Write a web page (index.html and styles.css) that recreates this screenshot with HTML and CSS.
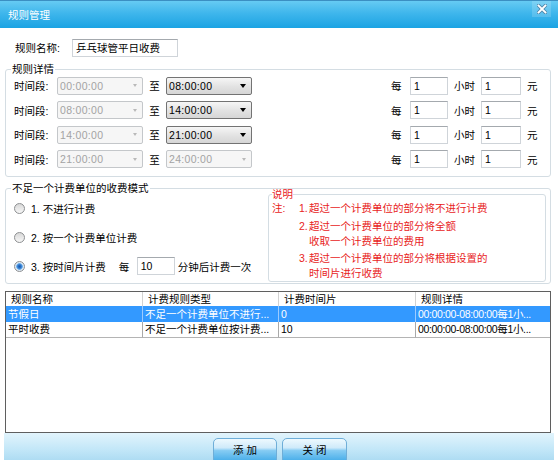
FILE: index.html
```html
<!DOCTYPE html>
<html lang="zh-CN">
<head>
<meta charset="utf-8">
<title>规则管理</title>
<link rel="stylesheet" href="styles.css">
</head>
<body>
<div class="window">
  <div class="titlebar">
    <span class="title">规则管理</span>
    <span class="close"><svg width="10" height="10" viewBox="0 0 10 10"><path d="M1.6 1.6 L8.4 8.4 M8.4 1.6 L1.6 8.4" stroke="#4f86aa" stroke-width="3.6" stroke-linecap="square"/><path d="M1.6 1.6 L8.4 8.4 M8.4 1.6 L1.6 8.4" stroke="#ffffff" stroke-width="2" stroke-linecap="square"/></svg></span>
  </div>
  <div class="body">
    <div class="name-row">
      <span class="name-label">规则名称:</span>
      <span class="field name-field">乒乓球管平日收费</span>
    </div>

    <fieldset class="group detail">
      <legend>规则详情</legend>
      <div class="rows">
        <div class="trow">
          <span class="seg-label">时间段:</span>
          <span class="combo off"><span class="val">00:00:00</span><span class="arrow"></span></span>
          <span class="to">至</span>
          <span class="combo on"><span class="val">08:00:00</span><span class="arrow"></span></span>
          <span class="price"><span class="u1">每</span><span class="field num">1</span><span class="u2">小时</span><span class="field num wide">1</span><span class="u3">元</span></span>
        </div>
        <div class="trow">
          <span class="seg-label">时间段:</span>
          <span class="combo off"><span class="val">08:00:00</span><span class="arrow"></span></span>
          <span class="to">至</span>
          <span class="combo on"><span class="val">14:00:00</span><span class="arrow"></span></span>
          <span class="price"><span class="u1">每</span><span class="field num">1</span><span class="u2">小时</span><span class="field num wide">1</span><span class="u3">元</span></span>
        </div>
        <div class="trow">
          <span class="seg-label">时间段:</span>
          <span class="combo off"><span class="val">14:00:00</span><span class="arrow"></span></span>
          <span class="to">至</span>
          <span class="combo on"><span class="val">21:00:00</span><span class="arrow"></span></span>
          <span class="price"><span class="u1">每</span><span class="field num">1</span><span class="u2">小时</span><span class="field num wide">1</span><span class="u3">元</span></span>
        </div>
        <div class="trow">
          <span class="seg-label">时间段:</span>
          <span class="combo off"><span class="val">21:00:00</span><span class="arrow"></span></span>
          <span class="to">至</span>
          <span class="combo off"><span class="val">24:00:00</span><span class="arrow"></span></span>
          <span class="price"><span class="u1">每</span><span class="field num">1</span><span class="u2">小时</span><span class="field num wide">1</span><span class="u3">元</span></span>
        </div>
      </div>
    </fieldset>

    <fieldset class="group mode">
      <legend>不足一个计费单位的收费模式</legend>
      <div class="mode-inner">
        <div class="radios">
          <div class="rrow"><span class="radio"></span><span>1. 不进行计费</span></div>
          <div class="rrow"><span class="radio"></span><span>2. 按一个计费单位计费</span></div>
          <div class="rrow"><span class="radio checked"></span><span>3. 按时间片计费</span><span class="every">每</span><span class="field slice">10</span><span class="after">分钟后计费一次</span></div>
        </div>
        <fieldset class="note">
          <legend>说明</legend>
          <div class="note-body">
            <span class="note-head">注:</span>
            <div class="note-list">
              <div class="item"><span class="no">1.</span><span>超过一个计费单位的部分将不进行计费</span></div>
              <div class="item"><span class="no">2.</span><span>超过一个计费单位的部分将全额<br>收取一个计费单位的费用</span></div>
              <div class="item"><span class="no">3.</span><span>超过一个计费单位的部分将根据设置的<br>时间片进行收费</span></div>
            </div>
          </div>
        </fieldset>
      </div>
    </fieldset>

    <div class="grid">
      <div class="hc">规则名称</div>
      <div class="hc">计费规则类型</div>
      <div class="hc">计费时间片</div>
      <div class="hc last">规则详情</div>

      <div class="c sel">节假日</div>
      <div class="c sel">不足一个计费单位不进行...</div>
      <div class="c sel">0</div>
      <div class="c sel last">00:00:00-08:00:00每1小...</div>

      <div class="c r2">平时收费</div>
      <div class="c r2">不足一个计费单位按计费...</div>
      <div class="c r2">10</div>
      <div class="c r2 last">00:00:00-08:00:00每1小...</div>
    </div>
  </div>
  <div class="footer">
    <button class="btn add">添 加</button>
    <button class="btn shut">关 闭</button>
  </div>
</div>
</body>
</html>
```

FILE: styles.css
```css
* { box-sizing: border-box; }

html, body {
  margin: 0;
  padding: 0;
}

body {
  width: 558px;
  height: 460px;
  overflow: hidden;
  background: #ffffff;
  font-family: "Liberation Sans", "Noto Sans CJK SC", sans-serif;
  font-size: 10.5px;
  color: #000;
}

.window {
  display: flex;
  flex-direction: column;
  height: 460px;
  background: #fff;
}

/* title bar */
.titlebar {
  height: 28px;
  flex: none;
  border-top: 1px solid #3b8fc2;
  background: linear-gradient(#66cbf3 0%, #3fb6ec 45%, #1ba3e3 100%);
  display: flex;
  justify-content: space-between;
  align-items: flex-start;
}

.title {
  color: #fff;
  line-height: 14px;
  margin: 7px 0 0 8px;
}

.close {
  width: 19px;
  height: 16px;
  margin-right: 7px;
  background: rgba(255, 255, 255, 0.16);
  display: flex;
  align-items: center;
  justify-content: center;
}

/* body */
.body {
  flex: 1;
  min-height: 0;
  display: flex;
  flex-direction: column;
  padding: 0 7px 0 5px;
}

.name-row {
  display: flex;
  align-items: center;
  height: 18px;
  margin-top: 11px;
  padding-left: 10px;
}

.name-label {
  width: 57px;
  line-height: 18px;
}

.field {
  display: flex;
  align-items: center;
  height: 18px;
  background: #fff;
  border: 1px solid #cfd4d9;
  border-top-color: #a4a9ae;
  padding-left: 3px;
  line-height: 16px;
  white-space: nowrap;
}

.name-field {
  width: 106px;
}

/* group boxes */
.group {
  margin: 0;
  min-width: 0;
  border: 1px solid #d4dde3;
  border-radius: 3px;
}

.group > legend {
  padding: 0 1px;
  margin-left: -3px;
  line-height: 14px;
}

.detail {
  margin-top: 5px;
  padding: 0 12px 7.5px 8px;
}

.rows {
  display: flex;
  flex-direction: column;
  gap: 5.5px;
}

.trow {
  display: flex;
  align-items: center;
  height: 19px;
}

.seg-label {
  width: 43px;
}

.combo {
  width: 86px;
  height: 18px;
  border: 1px solid;
  border-radius: 2px;
  display: flex;
  align-items: center;
  justify-content: space-between;
  padding: 0 5px 0 2px;
  letter-spacing: 0.3px;
}

.combo.off {
  border-color: #c4c7ca;
  background: #f6f6f6;
  color: #a3a3a3;
}

.combo.on {
  border-color: #737373;
  background: linear-gradient(#f6f6f6, #e2e2e2 55%, #d6d6d6);
  color: #000;
}

.arrow {
  width: 0;
  height: 0;
  border-left: 3px solid transparent;
  border-right: 3px solid transparent;
  border-top: 4px solid #000;
}

.combo.off .arrow {
  border-left-width: 2.5px;
  border-right-width: 2.5px;
  border-top: 3px solid #b9b9b9;
}

.to {
  width: 23px;
  text-align: center;
}

.price {
  margin-left: auto;
  display: flex;
  align-items: center;
}

.u1 { width: 19px; }
.num { width: 38px; }
.num.wide { width: 40px; }
.u2 { width: 27px; margin-left: 6px; }
.u3 { width: 11px; margin-left: 6px; }

/* charge mode */
.mode {
  margin-top: 4px;
  padding: 0 4px 1px 8px;
}

.mode-inner {
  display: flex;
  align-items: flex-start;
}

.radios {
  flex: 1;
  display: flex;
  flex-direction: column;
  gap: 11px;
  padding-top: 4px;
}

.rrow {
  display: flex;
  align-items: center;
  height: 18px;
}

.radio {
  width: 11px;
  height: 11px;
  border-radius: 50%;
  border: 1px solid #8d8f91;
  background: linear-gradient(#d8d8d8, #f7f7f7);
  margin-right: 6px;
  flex: none;
}

.radio.checked {
  background: radial-gradient(circle, #1b55a8 0, #2f78cc 1.8px, #6fb0ec 3px, #d9e6f2 3.6px, #eef2f6 100%);
}

.every { margin-left: 13px; width: 18px; }
.slice { width: 38px; }
.after { margin-left: 3px; }

.note {
  margin: -8px 0 0 0;
  width: 278px;
  min-width: 0;
  padding: 0 0 0 3px;
  border: 1px solid #d4dde3;
  border-radius: 3px;
  color: #e8231c;
}

.note > legend {
  padding: 0;
  line-height: 14px;
}

.note-body {
  display: flex;
  align-items: flex-start;
  line-height: 15px;
}

.note-head {
  width: 27px;
}

.note-list {
  display: flex;
  flex-direction: column;
  gap: 2.5px;
}

.item {
  display: flex;
}

.no {
  width: 10px;
}

/* list view */
.grid {
  flex: 1;
  min-height: 0;
  margin-top: 7px;
  border: 1px solid #5f5f5f;
  background: #fff;
  display: grid;
  grid-template-columns: 137px 136px 137px 1fr;
  grid-auto-rows: min-content;
  align-content: start;
}

.hc {
  height: 14px;
  line-height: 14px;
  padding-left: 5px;
  border-right: 1px solid #d2d2d2;
  white-space: nowrap;
}

.c {
  height: 16px;
  line-height: 16px;
  padding-left: 2px;
  border-right: 1px solid #a9a9a9;
  white-space: nowrap;
  overflow: hidden;
}

.c.last {
  letter-spacing: -0.35px;
}

.c.sel {
  background: #3399ff;
  color: #fff;
  border-right-color: #9ccbff;
}

.c.r2 {
  height: 16px;
  line-height: 15px;
  border-bottom: 1px solid #b4b4b4;
}

.hc.last, .c.last {
  border-right: none;
}

/* footer */
.footer {
  height: 27px;
  flex: none;
  margin: 0 4px;
  background: linear-gradient(#e2f4fc, #c3e7f8 60%, #aedcf3);
  display: flex;
  justify-content: center;
  align-items: flex-start;
  gap: 5px;
  padding: 5px 0 0 2px;
}

.btn {
  height: 23px;
  border: 1px solid #6eaed8;
  border-radius: 5px 5px 0 0;
  background: linear-gradient(#eef9fe 0%, #cfeafa 42%, #86ccf3 55%, #4db0ea 100%);
  font-family: "Liberation Sans", "Noto Sans CJK SC", sans-serif;
  font-size: 10.5px;
  color: #000;
  padding: 0;
  line-height: 20px;
  cursor: pointer;
}

.add { width: 64px; }
.shut { width: 65px; }
```
